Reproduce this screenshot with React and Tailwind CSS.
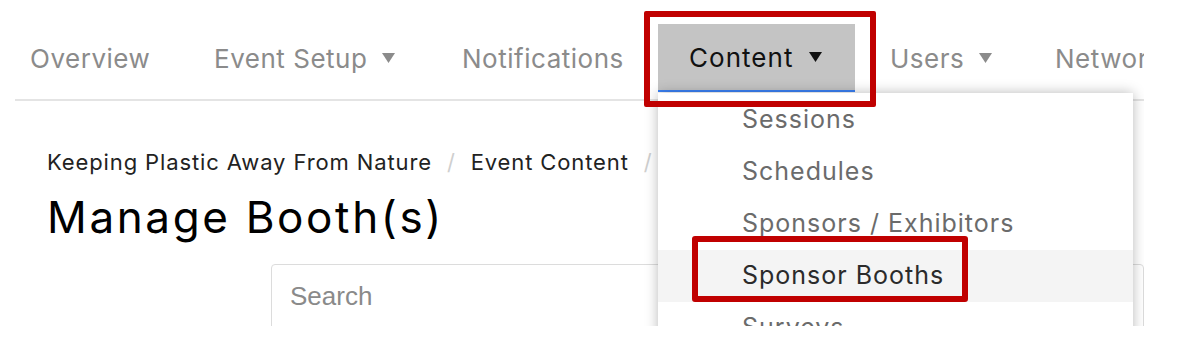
import React from 'react';

const Caret = ({ className }) => (
  <svg width="13" height="10" viewBox="0 0 13 10" className={className}>
    <path d="M0 0 L13 0 L6.5 10 Z" fill="currentColor" />
  </svg>
);

const navItems = [
  { label: 'Overview', w: 'w-[184px]' },
  { label: 'Event Setup', caret: true, w: 'w-[248px]' },
  { label: 'Notifications', w: 'w-[196px]' },
  { label: 'Content', caret: true, active: true },
  { label: 'Users', caret: true, w: 'w-[165px]' },
  { label: 'Network', w: 'w-[160px]' },
];

const menuItems = ['Sessions', 'Schedules', 'Sponsors / Exhibitors', 'Sponsor Booths', 'Surveys'];

export default function App() {
  return (
    <div className="w-[1192px] h-[356px] bg-white" style={{ fontFamily: 'Inter, "Open Sans", sans-serif' }}>
      <div className="relative w-[1144px] h-[326px] overflow-hidden">
        {/* Top nav */}
        <div className="ml-[15px] pl-[15px] pt-[24px] pb-[7px] border-b-2 border-[#e4e4e4] flex items-center">
          {navItems.map((item) =>
            item.active ? (
              <div
                key={item.label}
                className="shrink-0 mr-[35px] w-[197px] h-[68px] bg-[#c4c4c4] border-b-2 border-[#3b82f6] flex items-center pl-[31px] text-[#111] text-[26px] tracking-[0.04em] whitespace-nowrap"
              >
                {item.label}
                <Caret className="ml-[15px] text-[#111]" />
              </div>
            ) : (
              <div
                key={item.label}
                className={`${item.w} shrink-0 h-[68px] flex items-center text-[#8b8b8b] text-[26px] tracking-[0.02em] whitespace-nowrap`}
              >
                {item.label}
                {item.caret && <Caret className="ml-[15px] text-[#8b8b8b]" />}
              </div>
            )
          )}
        </div>

        {/* Page content */}
        <div className="pl-[47px]">
          <div className="mt-[45px] flex items-center text-[22px] text-[#222] tracking-[0.04em] whitespace-nowrap">
            <span>Keeping Plastic Away From Nature</span>
            <span className="mx-[15px] text-[#cfcfcf]">/</span>
            <span>Event Content</span>
            <span className="mx-[15px] text-[#cfcfcf]">/</span>
          </div>
          <h1 className="mt-[10px] text-[44px] leading-[56px] text-black tracking-[0.06em] whitespace-nowrap">Manage Booth(s)</h1>
        </div>
        <div className="ml-[271px] mt-[19px] h-[80px] border border-[#dcdcdc] rounded-[4px] pl-[18px] pt-[12px]">
          <span className="text-[26px] text-[#8a8a8a]" style={{ fontFamily: '"Liberation Sans", Arial, sans-serif' }}>Search</span>
        </div>

        {/* Dropdown */}
        <div className="absolute left-[658px] top-[93px] w-[475px] h-[300px] bg-white shadow-[0_0_12px_rgba(0,0,0,0.28)]">
          <div className="h-[1px]" />
          {menuItems.map((m) => (
            <div
              key={m}
              className={`h-[52px] flex items-center pl-[84px] text-[25px] tracking-[0.04em] whitespace-nowrap ${
                m === 'Sponsor Booths' ? 'bg-[#f4f4f4] text-[#2b2b2b]' : 'text-[#6b6b6b]'
              }`}
            >
              {m}
            </div>
          ))}
        </div>

        {/* Annotation boxes */}
        <div className="absolute left-[644px] top-[11px] w-[232px] h-[96px] border-[6px] border-[#c00000] rounded-[2px]" />
        <div className="absolute left-[692px] top-[236px] w-[276px] h-[66px] border-[6px] border-[#c00000] rounded-[3px]" />
      </div>
    </div>
  );
}
